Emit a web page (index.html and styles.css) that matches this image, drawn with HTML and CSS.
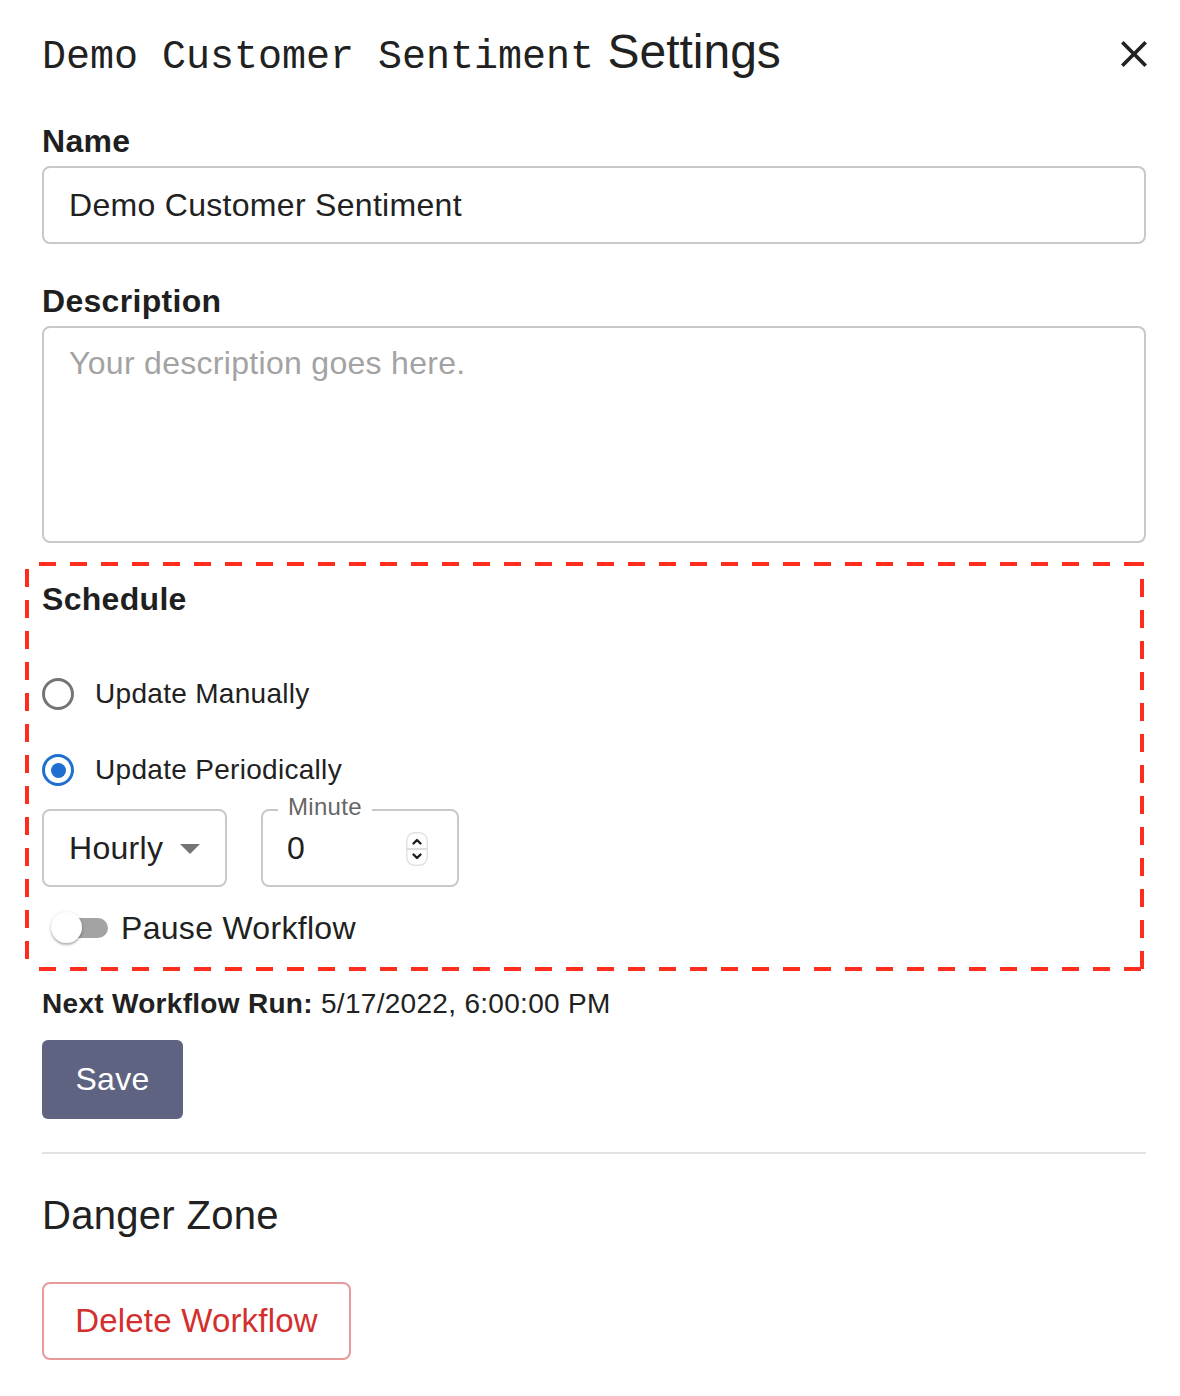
FILE: index.html
```html
<!DOCTYPE html>
<html lang="en">
<head>
<meta charset="utf-8">
<title>Settings</title>
<link rel="stylesheet" href="styles.css">
</head>
<body>
<div class="panel">
  <header class="head">
    <h1 class="title"><code class="mono">Demo Customer Sentiment</code> Settings</h1>
    <button class="close" aria-label="Close">
      <svg width="26" height="26" viewBox="5 5 14 14"><path d="M19 6.41 17.59 5 12 10.59 6.41 5 5 6.41 10.59 12 5 17.59 6.41 19 12 13.41 17.59 19 19 17.59 13.41 12z" fill="#222"/></svg>
    </button>
  </header>

  <div class="field">
    <div class="label">Name</div>
    <div class="input">Demo Customer Sentiment</div>
  </div>

  <div class="field field-desc">
    <div class="label">Description</div>
    <div class="textarea">Your description goes here.</div>
  </div>

  <section class="schedule">
    <div class="label">Schedule</div>
    <div class="radio-row first">
      <span class="radio"></span>
      <span class="radio-text">Update Manually</span>
    </div>
    <div class="radio-row">
      <span class="radio checked"><span class="dot"></span></span>
      <span class="radio-text">Update Periodically</span>
    </div>
    <div class="period">
      <div class="select">
        <span>Hourly</span>
        <svg class="caret" width="20" height="10" viewBox="0 0 20 10"><polygon points="0,0 20,0 10,10" fill="#757575"/></svg>
      </div>
      <div class="num">
        <span class="num-label">Minute</span>
        <span class="num-value">0</span>
        <svg class="spin" width="22" height="34" viewBox="0 0 22 34"><rect x="0.75" y="0.75" width="20.5" height="32.5" rx="8" fill="#fff" stroke="#e2e2e2" stroke-width="1.5"/><line x1="1" y1="17" x2="21" y2="17" stroke="#d4d4d4" stroke-width="1.5"/><path d="M7.5 11.5 L11 8 L14.5 11.5" fill="none" stroke="#1e1e1e" stroke-width="2.4" stroke-linecap="round" stroke-linejoin="round"/><path d="M7.5 22.5 L11 26 L14.5 22.5" fill="none" stroke="#1e1e1e" stroke-width="2.4" stroke-linecap="round" stroke-linejoin="round"/></svg>
      </div>
    </div>
    <div class="toggle-row">
      <span class="switch"><span class="track"></span><span class="thumb"></span></span>
      <span class="toggle-text">Pause Workflow</span>
    </div>
  </section>

  <p class="next"><b>Next Workflow Run:</b> 5/17/2022, 6:00:00 PM</p>
  <button class="save">Save</button>
  <hr class="divider">
  <h2 class="danger">Danger Zone</h2>
  <button class="delete">Delete Workflow</button>
</div>
</body>
</html>
```

FILE: styles.css
```css
* { box-sizing: border-box; }

html, body {
  margin: 0;
  background: #fff;
}

body {
  font-family: "Liberation Sans", Arial, sans-serif;
  color: #212121;
  letter-spacing: 0.3px;
}

.panel {
  padding: 26px 34px 30px 42px;
}

.head {
  display: flex;
  justify-content: space-between;
  align-items: center;
  height: 58px;
}

.title {
  margin: 0;
  font-size: 48px;
  line-height: 58px;
  font-weight: 400;
  white-space: nowrap;
  letter-spacing: 0;
}

.mono {
  font-family: "Liberation Mono", "Courier New", monospace;
  font-size: 40px;
  letter-spacing: 0;
}

.close {
  border: 0;
  background: none;
  padding: 0;
  margin-right: -1px;
  margin-top: -2px;
  width: 26px;
  height: 26px;
  display: flex;
}

.label {
  font-size: 32px;
  line-height: 38px;
  font-weight: 700;
  color: #1f1f1f;
}

.field {
  margin-top: 38px;
}

.field-desc {
  margin-top: 38px;
}

.field .label {
  margin-bottom: 6px;
}

.input,
.textarea,
.select,
.num {
  border: 2px solid #c8c8c8;
  border-radius: 8px;
  font-size: 32px;
  color: #212121;
}

.input {
  height: 78px;
  display: flex;
  align-items: center;
  padding: 0 25px;
}

.textarea {
  height: 217px;
  padding: 16px 25px;
  line-height: 38px;
  color: #a3a3a3;
}

.schedule {
  margin: 19px 2px 0 -17px;
  padding: 18px 17px 5px 17px;
  background:
    linear-gradient(to right, #ff2d1e 17px, transparent 17px) 14px 0 / 31px 4px repeat-x,
    linear-gradient(to right, #ff2d1e 17px, transparent 17px) 14px 100% / 31px 4px repeat-x,
    linear-gradient(to bottom, #ff2d1e 18px, transparent 18px) 0 7px / 4px 31px repeat-y,
    linear-gradient(to bottom, #ff2d1e 18px, transparent 18px) 100% 17px / 4px 31px repeat-y;
}

.radio-row {
  display: flex;
  align-items: center;
  height: 76px;
}

.radio-row.first {
  margin-top: 38px;
}

.radio {
  width: 32px;
  height: 32px;
  border-radius: 50%;
  border: 3px solid #757575;
  display: flex;
  align-items: center;
  justify-content: center;
  flex: none;
}

.radio.checked {
  border-color: #1f6fd1;
}

.dot {
  width: 15px;
  height: 15px;
  border-radius: 50%;
  background: #1f6fd1;
}

.radio-text {
  margin-left: 21px;
  font-size: 28px;
  line-height: 34px;
}

.period {
  display: flex;
  gap: 34px;
  margin-top: 1px;
}

.select {
  width: 185px;
  height: 78px;
  display: flex;
  align-items: center;
  padding: 0 0 0 25px;
}

.caret {
  margin-left: 17px;
  margin-top: 2px;
}

.num {
  position: relative;
  width: 198px;
  height: 78px;
  display: flex;
  align-items: center;
  justify-content: space-between;
  padding: 0 29px 0 24px;
}

.num-label {
  position: absolute;
  left: 15px;
  top: -16px;
  padding: 0 10px;
  background: #fff;
  font-size: 24px;
  line-height: 24px;
  color: #666;
}

.spin {
  display: block;
  margin-top: 2px;
}

.toggle-row {
  display: flex;
  align-items: center;
  height: 76px;
  margin-top: 3px;
}

.switch {
  position: relative;
  width: 66px;
  height: 30px;
  flex: none;
}

.track {
  position: absolute;
  left: 10px;
  top: 5px;
  width: 56px;
  height: 20px;
  border-radius: 10px;
  background: #a3a3a3;
}

.thumb {
  position: absolute;
  left: 9px;
  top: -1px;
  width: 31px;
  height: 31px;
  border-radius: 50%;
  background: #fff;
  box-shadow: 0 2px 2px rgba(0,0,0,0.22), 0 1px 4px rgba(0,0,0,0.14);
}

.toggle-text {
  margin-left: 13px;
  font-size: 32px;
  line-height: 38px;
}

.next {
  margin: 16px 0 0;
  font-size: 28px;
  line-height: 34px;
}

.next b {
  font-weight: 700;
}

.save {
  display: block;
  margin-top: 19px;
  width: 141px;
  height: 79px;
  border: 0;
  border-radius: 6px;
  background: #5d6380;
  color: #fff;
  font-family: "Liberation Sans", Arial, sans-serif;
  font-size: 32px;
  letter-spacing: 0.3px;
  padding: 0;
}

.divider {
  margin: 33px 0 0;
  border: 0;
  height: 2px;
  background: #e2e2e2;
}

.danger {
  margin: 37px 0 0;
  font-size: 40px;
  line-height: 48px;
  font-weight: 400;
}

.delete {
  display: block;
  margin-top: 43px;
  width: 309px;
  height: 78px;
  border: 2px solid #e89999;
  border-radius: 8px;
  background: #fff;
  color: #d32f2f;
  font-family: "Liberation Sans", Arial, sans-serif;
  font-size: 33px;
  letter-spacing: 0.2px;
  padding: 0;
}
```
